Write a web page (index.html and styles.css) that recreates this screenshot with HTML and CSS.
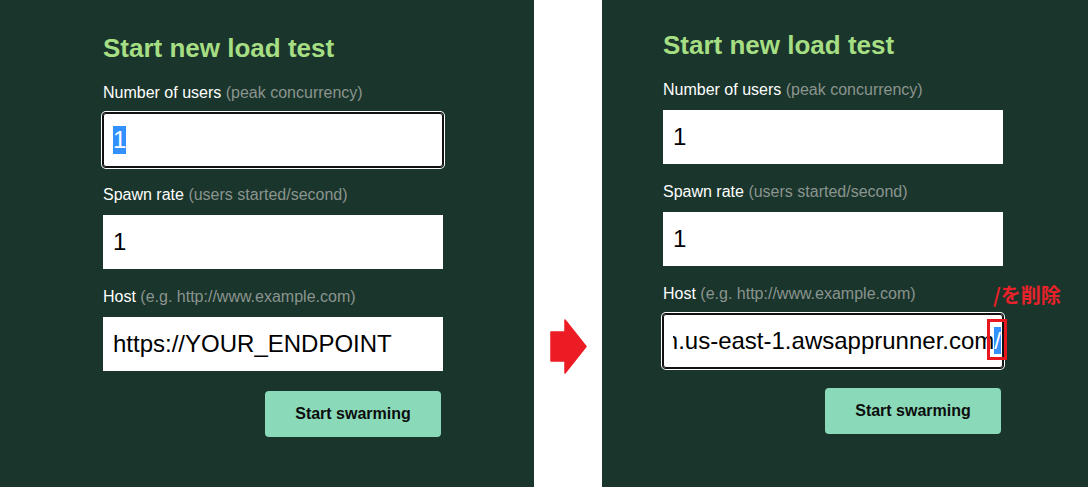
FILE: index.html
```html
<!DOCTYPE html>
<html lang="ja">
<head>
<meta charset="utf-8">
<title>Start new load test</title>
<link rel="stylesheet" href="styles.css">
</head>
<body>
<div class="page">
  <section class="panel panel-left">
    <div class="form">
      <h2 class="title">Start new load test</h2>
      <div class="field">
        <div class="label">Number of users <span class="hint">(peak concurrency)</span></div>
        <div class="input focused"><span class="sel">1</span></div>
      </div>
      <div class="field">
        <div class="label">Spawn rate <span class="hint">(users started/second)</span></div>
        <div class="input">1</div>
      </div>
      <div class="field">
        <div class="label">Host <span class="hint">(e.g. http://www.example.com)</span></div>
        <div class="input">https://YOUR_ENDPOINT</div>
      </div>
      <button class="btn">Start swarming</button>
    </div>
  </section>

  <div class="gap">
    <svg class="arrow" width="37" height="56" viewBox="0 0 37 56">
      <path d="M1 13 H15 V1 L36 27.5 L15 54 V42 H1 Z" fill="#ec1c24" stroke="#ec1c24" stroke-width="1.5" stroke-linejoin="round"/>
    </svg>
  </div>

  <section class="panel panel-right">
    <div class="form">
      <h2 class="title">Start new load test</h2>
      <div class="field">
        <div class="label">Number of users <span class="hint">(peak concurrency)</span></div>
        <div class="input">1</div>
      </div>
      <div class="field">
        <div class="label">Spawn rate <span class="hint">(users started/second)</span></div>
        <div class="input">1</div>
      </div>
      <div class="field host-field">
        <div class="label">Host <span class="hint">(e.g. http://www.example.com)</span></div>
        <span class="note">/を削除</span>
        <div class="input focused scrolled">
          <div class="clip"><span class="val">n.us-east-1.awsapprunner.com<span class="sel">/</span></span></div>
          <span class="mark"></span>
        </div>
      </div>
      <button class="btn">Start swarming</button>
    </div>
  </section>
</div>
</body>
</html>
```

FILE: styles.css
```css
html, body {
  margin: 0;
  padding: 0;
  background: #ffffff;
}

body {
  font-family: "Liberation Sans", Arial, sans-serif;
}

.page {
  display: flex;
  width: 1088px;
  height: 487px;
}

.panel {
  background: #1a352b;
  height: 487px;
  box-sizing: border-box;
}

.panel-left {
  width: 534px;
  padding: 33px 0 0 103px;
}

.panel-right {
  flex: 1;
  padding: 30px 0 0 61px;
}

.gap {
  width: 68px;
  background: #ffffff;
  display: flex;
  justify-content: center;
  padding-top: 319px;
  box-sizing: border-box;
}

.arrow {
  display: block;
  margin-left: 1px;
}

.form {
  width: 340px;
  display: flex;
  flex-direction: column;
}

.title {
  margin: 0 0 21px 0;
  font-size: 26px;
  line-height: 30px;
  font-weight: bold;
  color: #a6de84;
}

.field {
  position: relative;
  margin-bottom: 19px;
}

.label {
  font-size: 16px;
  line-height: 18px;
  color: #ffffff;
  margin-bottom: 11px;
  white-space: nowrap;
}

.hint {
  color: #8b948f;
}

.input {
  position: relative;
  height: 54px;
  background: #ffffff;
  display: flex;
  align-items: center;
  padding-left: 10px;
  box-sizing: border-box;
  font-size: 24px;
  color: #000000;
  white-space: nowrap;
}

.input.focused {
  border-radius: 3px;
  box-shadow: 0 0 0 1px #111111, inset 0 0 0 1px #111111, 0 0 0 2px #ffffff;
}

.sel {
  background: #3390ff;
  color: #ffffff;
}

.scrolled {
  padding-right: 2px;
}

.clip {
  flex: 1;
  overflow: hidden;
  display: flex;
  justify-content: flex-end;
}

.val {
  flex: none;
}

.mark {
  position: absolute;
  left: 324px;
  top: 5px;
  width: 20px;
  height: 41px;
  border: 3px solid #e8161f;
  box-sizing: border-box;
}

.note {
  position: absolute;
  left: 330px;
  top: 0;
  font-family: "Noto Sans CJK JP", sans-serif;
  font-size: 20px;
  line-height: 20px;
  font-weight: bold;
  color: #e8222a;
  white-space: nowrap;
}

.btn {
  align-self: flex-end;
  margin: 1px 2px 0 0;
  width: 176px;
  height: 46px;
  border: none;
  border-radius: 4px;
  background: #8adab9;
  color: #0d0d0d;
  font-family: "Liberation Sans", Arial, sans-serif;
  font-size: 16px;
  font-weight: bold;
  padding: 0;
}
```
